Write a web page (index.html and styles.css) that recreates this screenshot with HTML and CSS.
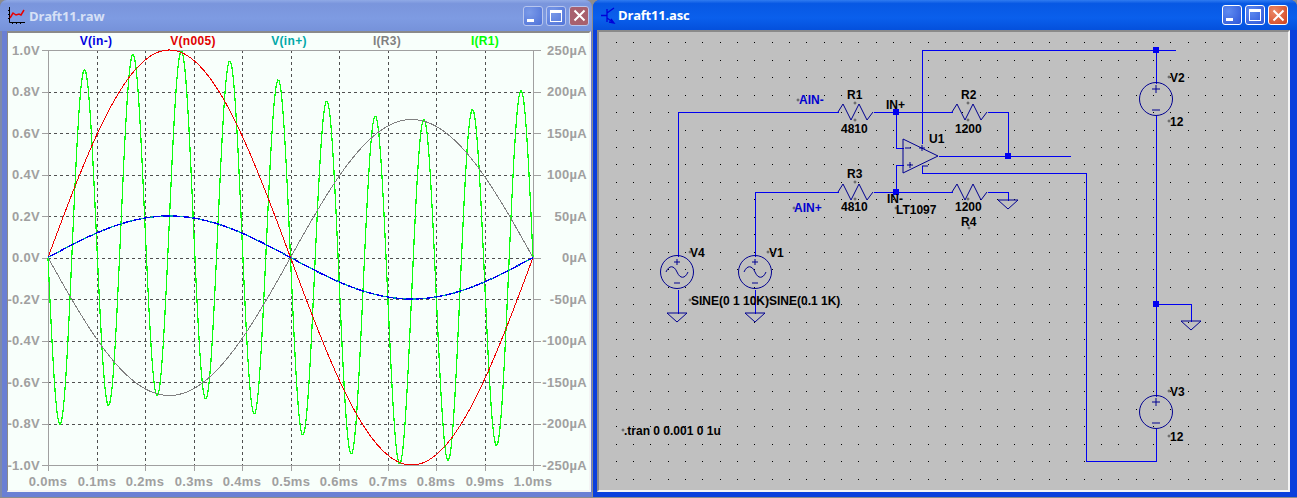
FILE: index.html
```html
<!DOCTYPE html>
<html lang="en">
<head>
    <meta charset="UTF-8">
    <title>LTspice</title>
    <link rel="stylesheet" href="styles.css">
</head>
<body>
    <div class="desktop">
        <div class="window window-raw">
            <div class="titlebar">
                <svg class="title-icon" width="17" height="17" viewBox="0 0 17 17">
                    <path class="icon-axes" d="M1.5 0V15.5H17M0 3.5H1M0 7.5H1M0 11.5H1M4.5 16V17M8.5 16V17M12.5 16V17"/>
                    <path class="icon-trace" d="M2 11L5 6L8 8L11 7L13 8L16 3"/>
                </svg>
                <div class="title-text">Draft11.raw</div>
                <div class="buttons">
                    <div class="btn"><span class="glyph-min"></span></div>
                    <div class="btn"><span class="glyph-max"></span></div>
                    <div class="btn btn-close"><svg width="13" height="13" viewBox="0 0 13 13"><path d="M1.5 1.5L11.5 11.5M11.5 1.5L1.5 11.5"/></svg></div>
                </div>
            </div>
            <div class="pane plot-pane">
                <svg id="plot" width="581" height="457" viewBox="8 33 581 457">
                    <g class="grid" id="plotGrid"></g>
                    <g class="axes" id="plotAxes"></g>
                    <g id="plotCurves"></g>
                    <g class="trace-names">
                        <text class="name-blue" x="96" y="45">V(in-)</text>
                        <text class="name-red" x="193" y="45">V(n005)</text>
                        <text class="name-teal" x="289" y="45">V(in+)</text>
                        <text class="name-grey" x="387" y="45">I(R3)</text>
                        <text class="name-green" x="485" y="45">I(R1)</text>
                    </g>
                    <g class="tick-labels">
                        <text x="40" y="55">1.0V</text>
                        <text x="40" y="96">0.8V</text>
                        <text x="40" y="138">0.6V</text>
                        <text x="40" y="179">0.4V</text>
                        <text x="40" y="221">0.2V</text>
                        <text x="40" y="262">0.0V</text>
                        <text x="40" y="304">-0.2V</text>
                        <text x="40" y="345">-0.4V</text>
                        <text x="40" y="387">-0.6V</text>
                        <text x="40" y="428">-0.8V</text>
                        <text x="40" y="470">-1.0V</text>
                        <text x="587" y="55">250µA</text>
                        <text x="587" y="96">200µA</text>
                        <text x="587" y="138">150µA</text>
                        <text x="587" y="179">100µA</text>
                        <text x="587" y="221">50µA</text>
                        <text x="587" y="262">0µA</text>
                        <text x="587" y="304">-50µA</text>
                        <text x="587" y="345">-100µA</text>
                        <text x="587" y="387">-150µA</text>
                        <text x="587" y="428">-200µA</text>
                        <text x="587" y="470">-250µA</text>
                    </g>
                    <g class="tick-labels tick-labels-x">
                        <text x="48" y="486">0.0ms</text>
                        <text x="97" y="486">0.1ms</text>
                        <text x="145" y="486">0.2ms</text>
                        <text x="194" y="486">0.3ms</text>
                        <text x="242" y="486">0.4ms</text>
                        <text x="291" y="486">0.5ms</text>
                        <text x="339" y="486">0.6ms</text>
                        <text x="388" y="486">0.7ms</text>
                        <text x="436" y="486">0.8ms</text>
                        <text x="485" y="486">0.9ms</text>
                        <text x="533" y="486">1.0ms</text>
                    </g>
                </svg>
            </div>
        </div>

        <div class="window window-asc">
            <div class="titlebar">
                <svg class="title-icon" width="17" height="17" viewBox="0 0 17 17">
                    <path class="icon-transistor" d="M1 8.5H7M7 2V15M7 6L14 1M7 11L14 16M11 12L14 16L9 15"/>
                </svg>
                <div class="title-text">Draft11.asc</div>
                <div class="buttons">
                    <div class="btn"><span class="glyph-min"></span></div>
                    <div class="btn"><span class="glyph-max"></span></div>
                    <div class="btn btn-close"><svg width="13" height="13" viewBox="0 0 13 13"><path d="M1.5 1.5L11.5 11.5M11.5 1.5L1.5 11.5"/></svg></div>
                </div>
            </div>
            <div class="pane schematic-pane">
                <svg id="schematic" width="689" height="458" viewBox="599 32 689 458">
                    <defs>
                        <polyline id="res" points="0,0 5,-8 13,8 21,-8 29,8 35,0"/>
                        <polyline id="gnd" points="-10,0 10,0 0,9 -10,0"/>
                        <g id="vsine">
                            <circle cx="0" cy="0" r="16.5"/>
                            <path d="M-3 -10H3M0 -13V-7M-3 11H3"/>
                            <path d="M-11 0C-8 -7 -3 -7 0 0C3 7 8 7 11 0"/>
                        </g>
                        <g id="vdc">
                            <circle cx="0" cy="0" r="16.5"/>
                            <path d="M-4 -10H4M0 -14V-6M-4 11H4"/>
                        </g>
                    </defs>
                    <g id="dots"></g>
                    <g class="wires">
                        <polyline points="678,256 678,112 838,112"/>
                        <polyline points="873,112 952,112"/>
                        <polyline points="987,112 1008,112 1008,156"/>
                        <polyline points="938,156 1070,156"/>
                        <polyline points="896,112 896,148 903,148"/>
                        <polyline points="755,256 755,192 838,192"/>
                        <polyline points="873,192 952,192"/>
                        <polyline points="987,192 1008,192 1008,200"/>
                        <polyline points="896,192 896,165 903,165"/>
                        <polyline points="922,143 922,50 1175,50"/>
                        <polyline points="1156,50 1156,83"/>
                        <polyline points="1156,115 1156,396"/>
                        <polyline points="1156,428 1156,461 1086,461 1086,173 922,173 922,165"/>
                        <polyline points="1156,304 1191,304 1191,321"/>
                        <polyline points="678,289 678,313"/>
                        <polyline points="755,289 755,313"/>
                    </g>
                    <g class="junctions">
                        <rect x="893" y="109" width="6" height="6"/>
                        <rect x="893" y="189" width="6" height="6"/>
                        <rect x="1005" y="153" width="6" height="6"/>
                        <rect x="1153" y="47" width="6" height="6"/>
                        <rect x="1153" y="301" width="6" height="6"/>
                    </g>
                    <g class="symbols">
                        <use href="#res" x="838" y="112"/>
                        <use href="#res" x="952" y="112"/>
                        <use href="#res" x="838" y="192"/>
                        <use href="#res" x="952" y="192"/>
                        <polygon points="903,139 903,173 938,156"/>
                        <path d="M905 148H911M907 165H913M910 162V168M922 145V151M919 148H925M922 166H928"/>
                        <use href="#gnd" x="1008" y="200"/>
                        <use href="#gnd" x="1191" y="321"/>
                        <use href="#gnd" x="677" y="313"/>
                        <use href="#gnd" x="755" y="313"/>
                        <use href="#vsine" x="677" y="272"/>
                        <use href="#vsine" x="755" y="272"/>
                        <use href="#vdc" x="1156" y="99"/>
                        <use href="#vdc" x="1156" y="412"/>
                    </g>
                    <g class="anchors">
                        <circle cx="798" cy="100" r="1"/>
                        <circle cx="855" cy="103" r="1"/>
                        <circle cx="855" cy="120" r="1"/>
                        <circle cx="968" cy="103" r="1"/>
                        <circle cx="968" cy="120" r="1"/>
                        <circle cx="855" cy="182" r="1"/>
                        <circle cx="855" cy="199" r="1"/>
                        <circle cx="794" cy="208" r="1"/>
                        <circle cx="896" cy="208" r="1"/>
                        <circle cx="968" cy="199" r="1"/>
                        <circle cx="969" cy="228" r="1"/>
                        <circle cx="690" cy="252" r="1"/>
                        <circle cx="768" cy="252" r="1"/>
                        <circle cx="690" cy="300" r="1"/>
                        <circle cx="768" cy="300" r="1"/>
                        <circle cx="1169" cy="77" r="1"/>
                        <circle cx="1169" cy="121" r="1"/>
                        <circle cx="1169" cy="391" r="1"/>
                        <circle cx="1169" cy="436" r="1"/>
                        <circle cx="623" cy="430" r="1"/>
                    </g>
                    <g class="net-labels">
                        <text x="799" y="104">AIN-</text>
                        <text x="794" y="212">AIN+</text>
                    </g>
                    <g class="labels">
                        <text x="847" y="99">R1</text>
                        <text x="841" y="133">4810</text>
                        <text x="886" y="109">IN+</text>
                        <text x="961" y="99">R2</text>
                        <text x="955" y="133">1200</text>
                        <text x="929" y="143">U1</text>
                        <text x="847" y="178">R3</text>
                        <text x="841" y="211">4810</text>
                        <text x="887" y="203">IN-</text>
                        <text x="896" y="214">LT1097</text>
                        <text x="955" y="211">1200</text>
                        <text x="961" y="226">R4</text>
                        <text x="690" y="257">V4</text>
                        <text x="769" y="257">V1</text>
                        <text x="691" y="305">SINE(0 1 10K)</text>
                        <text x="769" y="305">SINE(0.1 1K)</text>
                        <text x="1170" y="82">V2</text>
                        <text x="1170" y="126">12</text>
                        <text x="1170" y="396">V3</text>
                        <text x="1170" y="441">12</text>
                        <text x="624" y="435">.tran 0 0.001 0 1u</text>
                    </g>
                </svg>
            </div>
        </div>
    </div>
    <script src="plot.js"></script>
</body>
</html>
```

FILE: styles.css
```css
body {
    margin: 0;
    overflow: hidden;
    background: #8c8c8c;
    font-family: "Liberation Sans", Arial, sans-serif;
}

.desktop {
    display: flex;
    gap: 1px;
    width: 1297px;
    height: 497px;
}

.window {
    display: flex;
    flex-direction: column;
    border-radius: 7px 7px 0 0;
}

.window-raw {
    width: 592px;
    background: #6a7fd4;
    box-shadow: inset 2px 0 0 #7f8aa8;
}

.window-asc {
    flex: 1;
    background: #0a3fdc;
}

.titlebar {
    display: flex;
    align-items: center;
    height: 30px;
    flex: none;
    border-radius: 7px 7px 0 0;
}

.window-raw .titlebar {
    height: 31px;
    padding: 0 3px 0 8px;
    background: linear-gradient(#8fa9e6, #7a95dc 12%, #7e9be2 60%, #7692da);
}

.window-asc .titlebar {
    padding: 0 9px 0 7px;
    background: linear-gradient(#2f7bf0, #0758e4 12%, #0a5fec 60%, #0450dc);
}

.title-icon {
    flex: none;
}

.icon-axes {
    fill: none;
    stroke: #000;
}

.icon-trace {
    fill: none;
    stroke: #e80000;
    stroke-width: 1.5;
}

.icon-transistor {
    fill: none;
    stroke: #0000d8;
    stroke-width: 1.3;
}

.title-text {
    flex: 1;
    margin-left: 4px;
    font-family: "Open Sans", sans-serif;
    font-size: 13px;
    font-weight: 700;
    letter-spacing: -.2px;
    white-space: nowrap;
}

.window-raw .title-text {
    color: #d6e0f6;
}

.window-asc .title-text {
    margin-left: 1px;
    color: #fff;
}

.buttons {
    display: flex;
    gap: 3px;
}

.btn {
    display: flex;
    justify-content: center;
    align-items: center;
    width: 20px;
    height: 20px;
    box-sizing: border-box;
    border: 1px solid #fff;
    border-radius: 3px;
    background: radial-gradient(circle at 30% 30%, #5f8bf0, #2c55d8);
}

.btn-close {
    background: radial-gradient(circle at 30% 30%, #ec8a68, #d0401c);
}

.btn svg path {
    fill: none;
    stroke: #fff;
    stroke-width: 2;
}

.glyph-min {
    align-self: flex-end;
    width: 7px;
    height: 3px;
    margin: 0 5px 3px 0;
    background: #fff;
}

.glyph-max {
    width: 12px;
    height: 12px;
    box-sizing: border-box;
    border: 1px solid #fff;
    border-top-width: 3px;
}

.window-raw .btn {
    border-color: #b8c6ee;
    background: radial-gradient(circle at 30% 30%, #7a9ae8, #4f72d8);
}

.window-raw .btn-close {
    background: #a8606e;
}

.pane {
    flex: 1;
    box-sizing: border-box;
    border-style: solid;
    border-width: 2px;
    border-color: #8a8a8a #f4f4f4 #f4f4f4 #8a8a8a;
}

.pane svg {
    display: block;
}

.plot-pane {
    margin: 0 1px 5px 7px;
    border-left-width: 1px;
    background: #f8fffb;
}

.schematic-pane {
    margin: 0 7px 5px 4px;
    background: #c0c0c0;
}

#plot {
    shape-rendering: crispEdges;
}

.grid line {
    stroke: #505050;
    stroke-dasharray: 3 3;
}

.axes line {
    stroke: #a0a0a0;
}

.curve {
    fill: none;
    stroke-width: 1;
}

.curve-green {
    stroke-width: 1.25;
}

.curve-blue {
    stroke-width: 1.4;
}

.curve-teal {
    stroke-dasharray: 3 7;
    stroke-width: 1.2;
}

.trace-names text {
    font-size: 12px;
    font-weight: 700;
    text-anchor: middle;
    letter-spacing: .3px;
}

.name-blue { fill: #0000e0; }
.name-red { fill: #e00000; }
.name-teal { fill: #00a8a8; }
.name-grey { fill: #808080; }
.name-green { fill: #00ff00; }

.tick-labels text {
    fill: #a0a0a0;
    font-size: 13px;
    font-weight: 700;
    text-anchor: end;
    letter-spacing: .3px;
}

.tick-labels-x text {
    text-anchor: middle;
}

.wires {
    transform: translate(.5px, .5px);
}

.wires polyline {
    fill: none;
    stroke: #0000f0;
    shape-rendering: crispEdges;
}

.junctions rect {
    fill: #0000f0;
}

.symbols,
.symbols polyline,
.symbols polygon,
.symbols circle,
.symbols path {
    fill: none;
    stroke: #000090;
}

.anchors circle {
    fill: none;
    stroke: #303030;
    stroke-width: .7;
}

.labels text,
.net-labels text {
    font-size: 12px;
    font-weight: 700;
}

.labels text {
    fill: #000;
}

.net-labels text {
    fill: #0000d0;
}
```

FILE: plot.js
```js
// LTspice style traces, all mapped to the left axis (1.0V == 250uA)
const NS = 'http://www.w3.org/2000/svg';
const X0 = 48, X1 = 533, Y0 = 50, Y1 = 465;

function el(parent, name, attrs) {
    const node = document.createElementNS(NS, name);
    for (const key in attrs) node.setAttribute(key, attrs[key]);
    parent.appendChild(node);
    return node;
}

function drawGrid() {
    const grid = document.getElementById('plotGrid');
    const axes = document.getElementById('plotAxes');
    for (let i = 0; i <= 10; i++) {
        const x = Math.round(X0 + (X1 - X0) * i / 10) + 0.5;
        const y = Math.round(Y0 + (Y1 - Y0) * i / 10) + 0.5;
        if (i > 0 && i < 10) {
            el(grid, 'line', { x1: x, y1: Y0, x2: x, y2: Y1 });
            el(grid, 'line', { x1: X0, y1: y, x2: X1, y2: y });
        }
        el(axes, 'line', { x1: x, y1: Y1, x2: x, y2: Y1 + 6 });
        el(axes, 'line', { x1: X0 - 6, y1: y, x2: X0, y2: y });
        el(axes, 'line', { x1: X1, y1: y, x2: X1 + 8, y2: y });
    }
    el(axes, 'line', { x1: X0 + 0.5, y1: Y0, x2: X0 + 0.5, y2: Y1 });
    el(axes, 'line', { x1: X1 + 0.5, y1: Y0, x2: X1 + 0.5, y2: Y1 });
    el(axes, 'line', { x1: X0, y1: Y0 + 0.5, x2: X1, y2: Y0 + 0.5 });
    el(axes, 'line', { x1: X0, y1: Y1 + 0.5, x2: X1, y2: Y1 + 0.5 });
}

function drawCurve(color, cls, fn) {
    const group = document.getElementById('plotCurves');
    const points = [];
    for (let i = 0; i <= 485; i++) {
        const t = i / 485;
        const x = X0 + (X1 - X0) * t;
        const y = (Y0 + Y1) / 2 - fn(t) * (Y1 - Y0) / 2;
        points.push(x.toFixed(2) + ',' + y.toFixed(2));
    }
    el(group, 'polyline', { class: 'curve ' + cls, stroke: color, points: points.join(' ') });
}

function drawDots() {
    const dots = document.getElementById('dots');
    for (let row = 0; row < 27; row++) {
        const y = Math.round(42.3 + row * 17.45);
        for (let col = 0; col < 40; col++) {
            const x = Math.round(598.3 + col * 17.33);
            el(dots, 'rect', { x: x, y: y, width: 1, height: 1, fill: '#000' });
        }
    }
}

const TAU = Math.PI * 2;
drawGrid();
drawCurve('#10ff10', 'curve-green', t => -0.83 * Math.sin(TAU * 10 * t) + 0.166 * Math.sin(TAU * t));
drawCurve('#808080', 'curve-grey', t => -0.665 * Math.sin(TAU * t));
drawCurve('#f00000', 'curve-red', t => Math.sin(TAU * t));
drawCurve('#0000f0', 'curve-blue', t => 0.2 * Math.sin(TAU * t));
drawCurve('#00a8a8', 'curve-teal', t => 0.2 * Math.sin(TAU * t));
drawDots();
```
